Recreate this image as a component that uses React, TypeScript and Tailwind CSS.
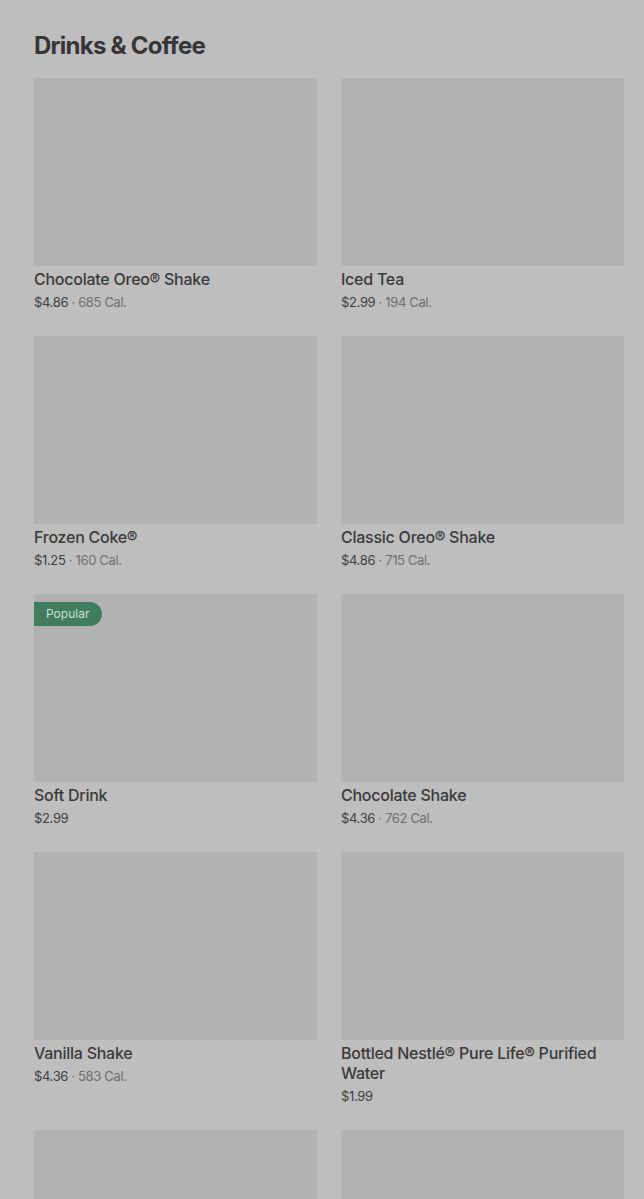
import React from 'react';

type item = {
    name: string;
    price: string;
    cal?: string;
    popular?: boolean;
};

const items: item[] = [
    { name: 'Chocolate Oreo® Shake', price: '$4.86', cal: '685 Cal.' },
    { name: 'Iced Tea', price: '$2.99', cal: '194 Cal.' },
    { name: 'Frozen Coke®', price: '$1.25', cal: '160 Cal.' },
    { name: 'Classic Oreo® Shake', price: '$4.86', cal: '715 Cal.' },
    { name: 'Soft Drink', price: '$2.99', popular: true },
    { name: 'Chocolate Shake', price: '$4.36', cal: '762 Cal.' },
    { name: 'Vanilla Shake', price: '$4.36', cal: '583 Cal.' },
    { name: 'Bottled Nestlé® Pure Life® Purified Water', price: '$1.99' },
    { name: '', price: '' },
    { name: '', price: '' },
];

function MenuCard({ info }: { info: item }) {
    return (
        <div className="flex flex-col">
            <div className="relative h-[188px] bg-[#b2b2b2]">
                {info.popular && (
                    <span className="absolute left-0 top-[8px] h-[24px] pl-[12px] pr-[13px] rounded-r-full bg-[#3f7d5d] text-[#cfe0d6] text-[12px] leading-[24px]">
                        Popular
                    </span>
                )}
            </div>
            {info.name && (
                <>
                    <p className="mt-[3px] text-[16px] leading-[20px] font-medium tracking-[-0.25px] text-[#3a3a3a]">
                        {info.name}
                    </p>
                    <p className="mt-[4px] text-[13px] leading-[18px] tracking-[-0.35px] text-[#3f3f3f]">
                        {info.price}
                        {info.cal && <span className="text-[#707070]"> · {info.cal}</span>}
                    </p>
                </>
            )}
        </div>
    );
}

export default function App() {
    return (
        <div
            className="min-h-screen h-[1199px] overflow-hidden bg-[#bebebe] pl-[34px] pr-[20px] pt-[30px]"
            style={{ fontFamily: 'Inter, "Noto Sans", sans-serif' }}
        >
            <h2 className="text-[24px] leading-[32px] font-bold tracking-[-0.75px] text-[#363636] mb-[16px]">
                Drinks &amp; Coffee
            </h2>
            <div className="grid grid-cols-2 gap-x-[24px] gap-y-[25px]">
                {items.map((it, i) => (
                    <MenuCard key={i} info={it} />
                ))}
            </div>
        </div>
    );
}
